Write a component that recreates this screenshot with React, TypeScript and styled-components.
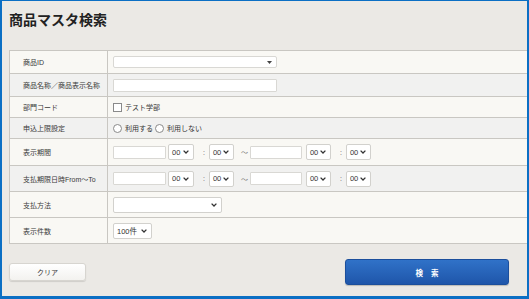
import styled, { createGlobalStyle } from 'styled-components';

const GlobalStyle = createGlobalStyle`
  html, body {
    margin: 0;
    padding: 0;
  }
  body {
    font-family: "Liberation Sans", "Noto Sans CJK JP", sans-serif;
    color: #333;
  }
`;

type Row = { label: string; height: number; tone: 'cream' | 'gray'; content: React.ReactNode };

function Chevron() {
  return (
    <svg width="6" height="4" viewBox="0 0 6 4">
      <path d="M0.6 0.6 L3 3 L5.4 0.6" fill="none" stroke="#333" strokeWidth="1.3" />
    </svg>
  );
}

function Caret() {
  return (
    <svg width="5" height="3" viewBox="0 0 5 3">
      <path d="M0 0 H5 L2.5 3 Z" fill="#444" />
    </svg>
  );
}

function TimeRange() {
  return (
    <Controls>
      <TextInput width={53} />
      <SelectBox width={26} gap={2}>
        <span>00</span>
        <Chevron />
      </SelectBox>
      <Colon>:</Colon>
      <SelectBox width={25}>
        <span>00</span>
        <Chevron />
      </SelectBox>
      <Tilde>～</Tilde>
      <TextInput width={52} />
      <SelectBox width={25} gap={4}>
        <span>00</span>
        <Chevron />
      </SelectBox>
      <Colon>:</Colon>
      <SelectBox width={25}>
        <span>00</span>
        <Chevron />
      </SelectBox>
    </Controls>
  );
}

function buildRows(): Row[] {
  return [
    {
      label: '商品ID',
      height: 23,
      tone: 'cream',
      content: (
        <SelectBox width={164} height={12} light>
          <span />
          <Caret />
        </SelectBox>
      ),
    },
    { label: '商品名称／商品表示名称', height: 23, tone: 'gray', content: <TextInput width={164} /> },
    {
      label: '部門コード',
      height: 21,
      tone: 'cream',
      content: (
        <Controls>
          <CheckBox />
          <OptionText>テスト学部</OptionText>
        </Controls>
      ),
    },
    {
      label: '申込上限設定',
      height: 21,
      tone: 'gray',
      content: (
        <Controls>
          <Radio />
          <OptionText>利用する</OptionText>
          <Radio />
          <OptionText>利用しない</OptionText>
        </Controls>
      ),
    },
    { label: '表示期間', height: 27, tone: 'cream', content: <TimeRange /> },
    { label: '支払期限日時From～To', height: 26, tone: 'gray', content: <TimeRange /> },
    {
      label: '支払方法',
      height: 26,
      tone: 'cream',
      content: (
        <SelectBox width={109}>
          <span />
          <Chevron />
        </SelectBox>
      ),
    },
    {
      label: '表示件数',
      height: 26,
      tone: 'cream',
      content: (
        <SelectBox width={39}>
          <span>100件</span>
          <Chevron />
        </SelectBox>
      ),
    },
  ];
}

export default function App() {
  const rows = buildRows();
  return (
    <>
      <GlobalStyle />
      <Frame>
        <Title>商品マスタ検索</Title>
        <SearchTable>
          <tbody>
            {rows.map((row) => (
              <TableRow key={row.label} height={row.height} tone={row.tone}>
                <LabelCell>{row.label}</LabelCell>
                <ValueCell>{row.content}</ValueCell>
              </TableRow>
            ))}
          </tbody>
        </SearchTable>
        <Actions>
          <ClearButton>クリア</ClearButton>
          <SearchButton>検 索</SearchButton>
        </Actions>
      </Frame>
    </>
  );
}

const Frame = styled.div`
  box-sizing: border-box;
  width: 529px;
  height: 299px;
  background: #ebe9e5;
  border-style: solid;
  border-color: #0b6fc4;
  border-width: 1px 2px 3px 2px;
  padding: 0 0 0 7px;
  display: flex;
  flex-direction: column;
`;

const Title = styled.h1`
  margin: 0;
  padding-top: 8px;
  height: 49px;
  box-sizing: border-box;
  font-family: "Noto Sans CJK JP", sans-serif;
  font-size: 14px;
  font-weight: bold;
  line-height: 20px;
  color: #222;
`;

const SearchTable = styled.table`
  border-collapse: collapse;
  width: 100%;
  table-layout: fixed;
  font-size: 7px;
`;

const TableRow = styled.tr<{ height: number; tone: 'cream' | 'gray' }>`
  height: ${(p) => p.height}px;
  background: ${(p) => (p.tone === 'cream' ? '#f9f8f4' : '#f1f1f0')};
`;

const LabelCell = styled.td`
  width: 84px;
  padding: 0 0 0 13px;
  border: 1px solid #c9c7c2;
  font-size: 7px;
  color: #3a3a3a;
  white-space: nowrap;
  vertical-align: middle;
`;

const ValueCell = styled.td`
  padding: 0 0 0 5px;
  border: 1px solid #c9c7c2;
  border-right: none;
  vertical-align: middle;
`;

const Controls = styled.div`
  display: flex;
  align-items: center;
`;

const TextInput = styled.div<{ width: number }>`
  box-sizing: border-box;
  width: ${(p) => p.width}px;
  height: 13px;
  background: #fff;
  border: 1px solid #d9d8d4;
  border-radius: 1px;
`;

const SelectBox = styled.div<{ width: number; height?: number; gap?: number; light?: boolean }>`
  box-sizing: border-box;
  width: ${(p) => p.width}px;
  height: ${(p) => p.height ?? 16}px;
  margin-left: ${(p) => p.gap ?? 0}px;
  padding: 0 4px 0 3px;
  display: flex;
  align-items: center;
  justify-content: space-between;
  background: #fff;
  border: 1px solid ${(p) => (p.light ? '#d9d8d4' : '#d2d1cd')};
  border-radius: 2px;
  font-size: 7.5px;
  color: #333;
`;

const Colon = styled.span`
  font-size: 7px;
  color: #555;
  margin: 0 4px 0 9px;
`;

const Tilde = styled.span`
  font-size: 7px;
  color: #777;
  margin: 0 2px 0 7px;
`;

const CheckBox = styled.span`
  box-sizing: border-box;
  width: 9px;
  height: 9px;
  background: #fff;
  border: 1px solid #8a8a8a;
`;

const Radio = styled.span`
  box-sizing: border-box;
  width: 9px;
  height: 9px;
  border-radius: 50%;
  background: #fff;
  border: 1px solid #8a8a8a;
`;

const OptionText = styled.span`
  font-size: 7px;
  color: #333;
  margin: 0 2px 0 3px;
`;

const Actions = styled.div`
  display: flex;
  align-items: center;
  justify-content: space-between;
  padding: 0 18px 0 0;
  margin-top: 15px;
`;

const ClearButton = styled.button`
  box-sizing: border-box;
  width: 77px;
  height: 18px;
  border: 1px solid #d7d5d0;
  border-radius: 3px;
  background: linear-gradient(#ffffff, #f3f2ef);
  box-shadow: 0 1px 1px rgba(0, 0, 0, 0.12);
  font-family: "Liberation Sans", "Noto Sans CJK JP", sans-serif;
  font-size: 7px;
  color: #333;
  padding: 0;
`;

const SearchButton = styled.button`
  box-sizing: border-box;
  width: 164px;
  height: 26px;
  border: 1px solid #1c4f9c;
  border-radius: 3px;
  background: linear-gradient(#3072c8, #1f56aa);
  box-shadow: 0 1px 1px rgba(0, 0, 0, 0.2);
  font-family: "Liberation Sans", "Noto Sans CJK JP", sans-serif;
  font-size: 7.5px;
  font-weight: bold;
  letter-spacing: 3px;
  color: #fff;
  padding: 0 0 0 3px;
`;
